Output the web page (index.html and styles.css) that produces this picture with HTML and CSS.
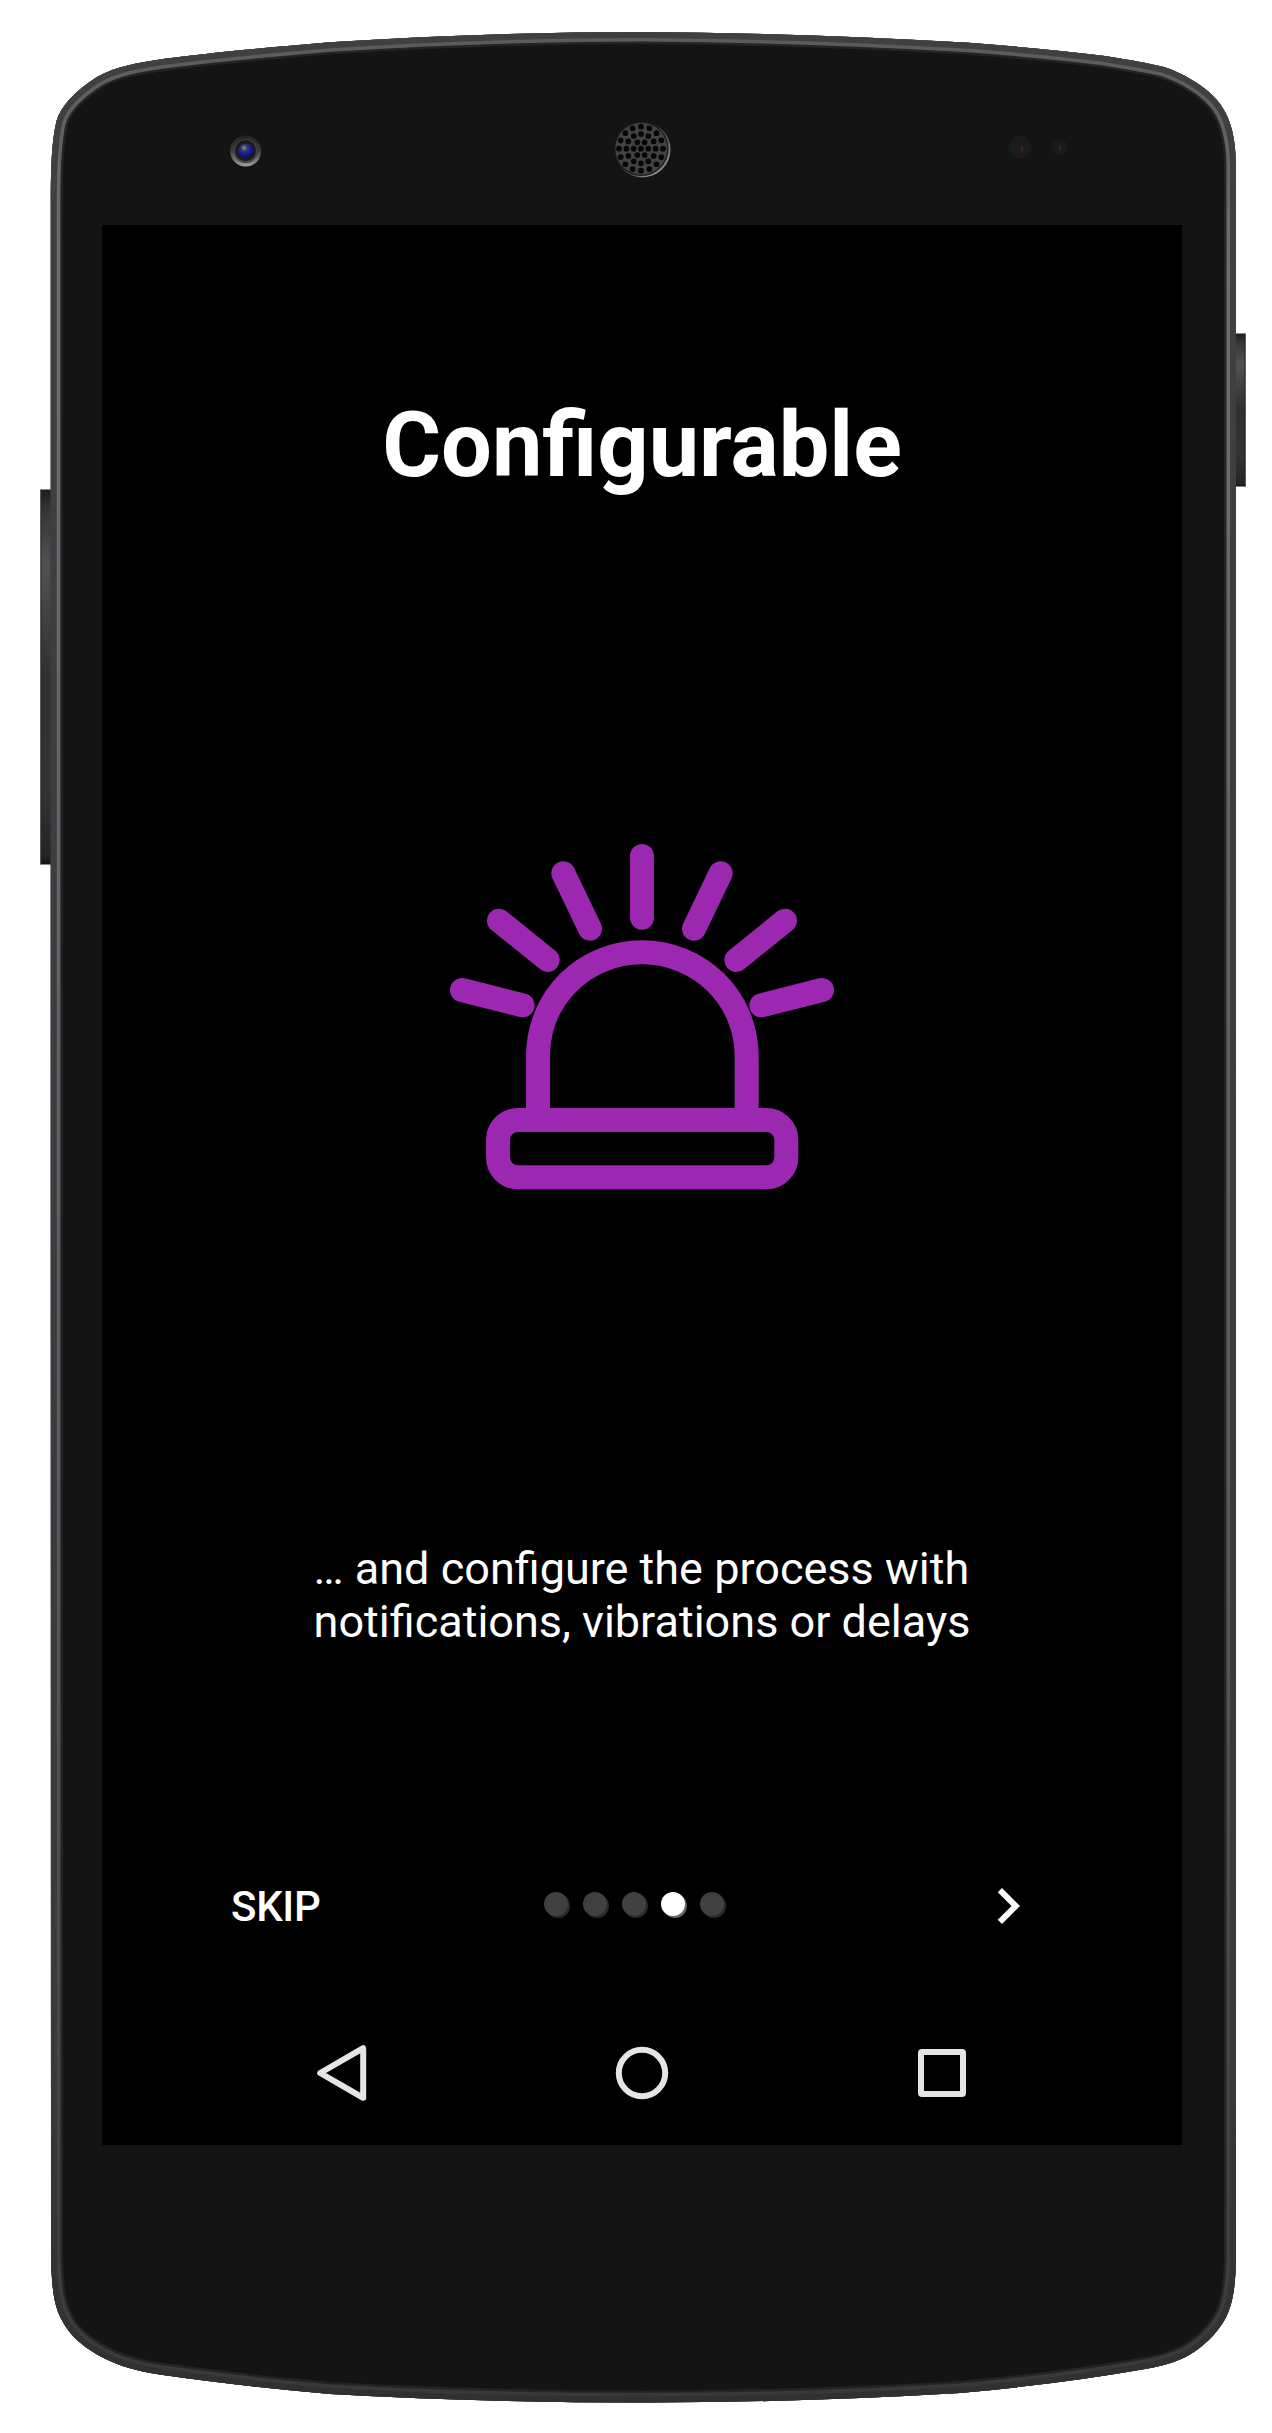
FILE: index.html
```html
<!DOCTYPE html>
<html lang="en">
<head>
<meta charset="utf-8">
<title>Configurable</title>
<link rel="stylesheet" href="styles.css">
</head>
<body>
<div class="phone">
  <svg class="phone-shell" viewBox="0 0 1272 2433" aria-hidden="true">
    <defs>
      <path id="shell" d="M50.8 1200 V200 C50.8 165 52 140 56.5 121 C61 106 74 92 97 77 C117 66 137 63 163 59 Q225 51 330 42.3 Q490 32 642 32 Q800 33 969 42.8 Q1050 49 1105 56 Q1143 62 1164 67 C1183 73 1207 87 1218.500 102 C1229 115 1235.500 133 1236 165 V2250 C1236 2285 1233 2302 1227 2315 C1222 2327 1208 2343 1194 2352 C1182 2360 1168 2365 1145 2369 Q1060 2384 960 2393 Q800 2402.500 643 2402.500 Q480 2402.500 330 2394 Q240 2386 163 2375 C133 2371 109 2363 90 2350 C79 2343 68 2332 63 2322 C54 2307 51.500 2290 51 2250 Z"/>
      <clipPath id="shell-clip"><use href="#shell"/></clipPath>
      <linearGradient id="outer-rim" gradientUnits="userSpaceOnUse" x1="0" y1="30" x2="0" y2="2400">
        <stop offset="0" stop-color="#404042"/><stop offset=".85" stop-color="#39393b"/><stop offset="1" stop-color="#303030"/>
      </linearGradient>
      <linearGradient id="inner-rim" gradientUnits="userSpaceOnUse" x1="0" y1="30" x2="0" y2="2400">
        <stop offset="0" stop-color="#5a5a5d"/><stop offset=".1" stop-color="#6c6c71"/><stop offset=".6" stop-color="#5a5a60"/><stop offset=".95" stop-color="#3e3e40"/><stop offset="1" stop-color="#383838"/>
      </linearGradient>
      <linearGradient id="key" x1="0" y1="0" x2="0" y2="1">
        <stop offset="0" stop-color="#1c1c1c"/><stop offset=".05" stop-color="#343434"/><stop offset=".2" stop-color="#515151"/><stop offset=".5" stop-color="#303030"/><stop offset=".8" stop-color="#333"/><stop offset=".98" stop-color="#242424"/><stop offset="1" stop-color="#111"/>
      </linearGradient>
      <linearGradient id="lens-ring" x1="0" y1="0" x2="0" y2="1">
        <stop offset="0" stop-color="#222"/><stop offset=".5" stop-color="#3c3c3c"/><stop offset="1" stop-color="#a09e9b"/>
      </linearGradient>
      <radialGradient id="lens" cx=".4" cy=".3" r=".7">
        <stop offset="0" stop-color="#8b929b"/><stop offset=".3" stop-color="#363c55"/><stop offset=".65" stop-color="#1414b0"/><stop offset="1" stop-color="#141436"/>
      </radialGradient>
      <linearGradient id="grille-rim" x1="0" y1="0" x2="1" y2="1">
        <stop offset=".3" stop-color="#1c1c1c"/><stop offset=".8" stop-color="#858585"/><stop offset="1" stop-color="#777"/>
      </linearGradient>
    </defs>
    <rect x="40.500" y="489.500" width="12" height="375" fill="url(#key)"/>
    <path d="M41 489.500V864.500" stroke="#222"/>
    <rect x="1234" y="333.500" width="11.500" height="153" fill="url(#key)"/>
    <path d="M1245 333.500V486.500" stroke="#222"/>
    <use href="#shell" fill="#141414"/>
    <g clip-path="url(#shell-clip)" fill="none">
      <use href="#shell" stroke="#242426" stroke-width="24"/>
      <use href="#shell" stroke="url(#inner-rim)" stroke-width="19"/>
      <use href="#shell" stroke="url(#outer-rim)" stroke-width="12"/>
    </g>
    <circle cx="245.700" cy="151" r="15.500" fill="url(#lens-ring)"/>
    <circle cx="245.700" cy="151" r="12" fill="#44413e"/>
    <circle cx="245.500" cy="150.500" r="10.500" fill="#1b1b1b"/>
    <circle cx="245.700" cy="151" r="7.500" fill="url(#lens)"/>
    <circle cx="642.500" cy="149.500" r="28" fill="url(#grille-rim)"/>
    <circle cx="641.300" cy="148.700" r="27.300" fill="#181818"/>
    <circle cx="641.300" cy="148.700" r="26" fill="#424242"/>
    <g fill="none" stroke="#060606" stroke-width="5.700" stroke-linecap="round">
      <circle cx="641" cy="148.700" r="22" pathLength="16" stroke-dasharray="0 1"/>
      <circle cx="641" cy="148.700" r="14.600" pathLength="12" stroke-dasharray="0 1"/>
      <circle cx="641" cy="148.700" r="7.300" pathLength="6" stroke-dasharray="0 1"/>
      <path d="M641 148.700h.01"/>
    </g>
    <circle cx="1020" cy="147" r="11.500" fill="#1b1b1b"/>
    <ellipse cx="1022" cy="149" rx="1.500" ry="3.500" fill="#3a2115"/>
    <circle cx="1059" cy="147" r="8" fill="#1b1b1b"/>
    <ellipse cx="1060" cy="147.500" rx="1.500" ry="3" fill="#3a2115"/>
  </svg>

  <main class="screen">
    <h1 class="title">Configurable</h1>
    <svg class="siren" viewBox="60 60 1152 1060" aria-hidden="true">
      <path d="M636 108V293M400 160L480 326M872 160L792 326M207 302L353 420M1065 302L919 420M96 510L278 556M1176 510L994 556" stroke-linecap="round"/>
      <path d="M324 900V710C324 533 464 397 636 397S950 533 950 710V900"/>
      <rect x="204" y="900" width="865" height="172" rx="60"/>
    </svg>
    <p class="description">… and configure the process with<br>notifications, vibrations or delays</p>
    <div class="pager">
      <button class="skip" type="button">SKIP</button>
      <div class="dots">
        <span class="dot"></span><span class="dot"></span><span class="dot"></span><span class="dot dot-active"></span><span class="dot"></span>
      </div>
      <button class="next" type="button" aria-label="Next">
        <svg viewBox="0 0 24 24" width="72" height="72"><path d="M10 6L8.590 7.410 13.170 12l-4.580 4.590L10 18l6-6z" fill="#fff"/></svg>
      </button>
    </div>
    <nav class="navbar">
      <svg viewBox="0 0 60 60"><path d="M8.200 30L51.200 5.200V54.800Z"/></svg>
      <svg viewBox="0 0 60 60"><circle cx="30" cy="30" r="23.200"/></svg>
      <svg viewBox="0 0 60 60"><rect x="9" y="9" width="42" height="42" rx="1"/></svg>
    </nav>
  </main>
</div>
</body>
</html>
```
FILE: styles.css
```css
* {
  box-sizing: border-box;
}

body {
  margin: 0;
  background: #fff;
  font-family: Roboto, sans-serif;
  color: #fff;
}

.phone {
  position: relative;
  width: 1272px;
  height: 2433px;
  padding: 225px 90px 288px 102px;
  overflow: hidden;
}

.phone-shell {
  position: absolute;
  inset: 0;
  width: 1272px;
  height: 2433px;
}

.screen {
  position: relative;
  display: flex;
  flex-direction: column;
  align-items: center;
  width: 1080px;
  height: 1920px;
  padding-top: 168px;
  background: #000;
}

.title {
  margin: 0;
  font-size: 90px;
  line-height: 105px;
  font-weight: 700;
}

.siren {
  width: 384px;
  height: 353.330px;
  margin-top: 342px;
  fill: none;
  stroke: #9c27b0;
  stroke-width: 72;
}

.description {
  margin: 348.670px 0 0;
  font-size: 45px;
  line-height: 53px;
}

.pager {
  display: flex;
  align-items: center;
  justify-content: space-between;
  width: 100%;
  height: 72px;
  margin-top: 222px;
  padding: 0 138px 0 129px;
}

.skip,
.next {
  padding: 0;
  border: 0;
  background: none;
  color: #fff;
  font: 500 42px/50px Roboto, sans-serif;
}

.skip {
  padding-top: 3px;
  letter-spacing: -0.3px;
}

.next {
  display: flex;
}

.dots {
  display: flex;
  gap: 15px;
  margin: -4px 25px 0 0;
}

.dot {
  width: 24px;
  height: 24px;
  border-radius: 50%;
  background: #404040;
  box-shadow: 2px 2px 0 #292929;
}

.dot-active {
  background: #fff;
  box-shadow: 2px 2px 0 #666;
}

.navbar {
  display: flex;
  justify-content: space-between;
  width: 660px;
  margin-top: 101px;
}

.navbar svg {
  width: 60px;
  height: 60px;
  fill: none;
  stroke: #e5e5e5;
  stroke-width: 6;
  stroke-linejoin: round;
}
```
